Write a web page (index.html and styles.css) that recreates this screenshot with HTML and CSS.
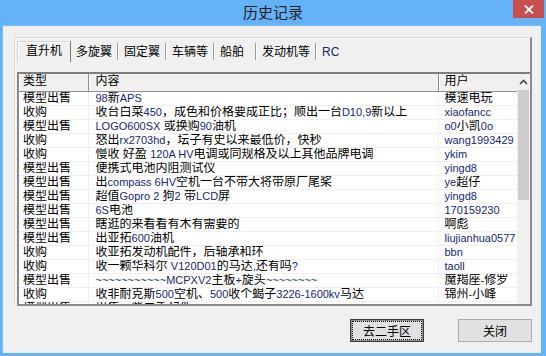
FILE: index.html
```html
<!DOCTYPE html>
<html>
<head>
<meta charset="utf-8" />
<title>历史记录</title>
<link rel="stylesheet" href="styles.css">
</head>
<body>
<div id="win">

<div class="titlebar">
<span class="title">历史记录</span>
<span class="close_btn">
<svg width="10" height="9" viewBox="0 0 10 9"><path d="M1 0.5 L9 8.5 M9 0.5 L1 8.5" stroke="#fff" stroke-width="1.8"/></svg>
</span>
</div>

<div class="client">

<div class="tab_frame">
<div class="tab_strip">
<span class="tab tab_on">直升机</span>
<span class="tab">多旋翼</span>
<span class="tab">固定翼</span>
<span class="tab">车辆等</span>
<span class="tab tab_wide">船舶</span>
<span class="tab">发动机等</span>
<span class="tab tab_last">RC</span>
</div>

<div class="list">
<div class="list_body">
<table class="grid">
<colgroup><col class="c_type" /><col class="c_msg" /><col class="c_user" /></colgroup>
<tr class="head"><th>类型</th><th>内容</th><th>用户</th></tr>
<tr><td>模型出售</td><td><span class="en">98</span>新<span class="en">APS</span></td><td>模速电玩</td></tr>
<tr><td>收购</td><td>收台白菜<span class="en">450</span>，成色和价格要成正比；顺出一台<span class="en">D10,9</span>新以上</td><td><span class="en">xiaofancc</span></td></tr>
<tr><td>模型出售</td><td><span class="en">LOGO600SX</span> 或换购<span class="en">90</span>油机</td><td><span class="en">o0</span>小凯<span class="en">0o</span></td></tr>
<tr><td>收购</td><td>怒出<span class="en">rx2703hd</span>，坛子有史以来最低价，快秒</td><td><span class="en">wang1993429</span></td></tr>
<tr><td>收购</td><td>慢收 好盈 <span class="en">120A HV</span>电调或同规格及以上其他品牌电调</td><td><span class="en">ykim</span></td></tr>
<tr><td>模型出售</td><td>便携式电池内阻测试仪</td><td><span class="en">yingd8</span></td></tr>
<tr><td>模型出售</td><td>出<span class="en">compass 6HV</span>空机一台不带大将带原厂尾桨</td><td><span class="en">ye</span>超仔</td></tr>
<tr><td>模型出售</td><td>超值<span class="en">Gopro 2</span> 狗<span class="en">2</span> 带<span class="en">LCD</span>屏</td><td><span class="en">yingd8</span></td></tr>
<tr><td>模型出售</td><td><span class="en">6S</span>电池</td><td><span class="en">170159230</span></td></tr>
<tr><td>模型出售</td><td>瞎逛的来看看有木有需要的</td><td>啊彪</td></tr>
<tr><td>模型出售</td><td>出亚拓<span class="en">600</span>油机</td><td><span class="en">liujianhua0577</span></td></tr>
<tr><td>收购</td><td>收亚拓发动机配件，后轴承和环</td><td><span class="en">bbn</span></td></tr>
<tr><td>收购</td><td>收一颗华科尔 <span class="en">V120D01</span>的马达<span class="en">,</span>还有吗<span class="en">?</span></td><td><span class="en">taoll</span></td></tr>
<tr><td>模型出售</td><td><span class="en">~~~~~~~~~~~MCPXV2</span>主板<span class="en">+</span>旋头<span class="en">~~~~~~~~</span></td><td>魔羯座<span class="en">-</span>修罗</td></tr>
<tr><td>收购</td><td>收非耐克斯<span class="en">500</span>空机、<span class="en">500</span>收个蝎子<span class="en">3226-1600kv</span>马达</td><td>锦州<span class="en">-</span>小峰</td></tr>
<tr><td>模型出售</td><td>出售一些二手配件</td><td><span class="en">heli</span></td></tr>
</table>
</div>
<div class="vscroll">
<div class="sb_up">
<svg width="9" height="6" viewBox="0 0 9 6"><path d="M1 5 L4.5 1.5 L8 5" fill="none" stroke="#444" stroke-width="1.6"/></svg>
</div>
<div class="sb_thumb"></div>
</div>
</div><!--list end-->
</div><!--tab_frame end-->

<div class="btn_row">
<span class="btn btn_focus"><span class="btn_txt">去二手区</span></span>
<span class="btn"><span class="btn_txt">关闭</span></span>
</div>

</div><!--client end-->
</div>
</body>
</html>
```

FILE: styles.css
```css
html,body{
	margin:0;
	padding:0;
}
body{
	width:546px;
	height:356px;
	overflow:hidden;
	background-color:#64b2f8;
	font-family:"Liberation Sans","Noto Sans CJK SC",sans-serif;
	font-size:12px;
	color:#000;
}
#win{
	display:flex;
	flex-direction:column;
	height:356px;
}
.en{
	color:#16277a;
	font-size:11px;
}

/* title bar */
.titlebar{
	height:25px;
	display:grid;
	grid-template-columns:1fr auto 1fr;
	align-items:start;
}
.title{
	grid-column:2;
	font-family:"Noto Sans CJK SC",sans-serif;
	font-size:15px;
	line-height:24px;
	color:#1e1e1e;
}
.close_btn{
	grid-column:3;
	justify-self:end;
	width:31px;
	height:18px;
	margin-right:2px;
	background-color:#c7504f;
	display:flex;
	align-items:center;
	justify-content:center;
}

/* client area */
.client{
	flex:1;
	margin:0 5px 3px 2px;
	background-color:#f0f0f0;
	padding:11px 9px 0 11px;
	border-top:1px solid #7cbcf5;
	border-left:1px solid #7cbcf5;
}
.tab_frame{
	height:268px;
	border-top:1px solid #d9d9d9;
	border-left:1px solid #d9d9d9;
	border-right:2px solid #8d8d8d;
	padding-left:2px;
	display:flex;
	flex-direction:column;
	box-shadow:inset 1px 1px 0 #fff;
}
.tab_strip{
	height:34px;
	display:flex;
	align-items:flex-start;
}
.tab{
	margin-top:5px;
	height:17px;
	line-height:19px;
	padding:0 5px;
	border-right:1px solid #9a9a9a;
	box-shadow:1px 0 0 #fff;
	margin-right:1px;
	white-space:nowrap;
}
.tab_on{
	margin-top:3px;
	height:20px;
	line-height:18px;
	padding:0 8px 0 8px;
	border-left:1px solid #d6d6d6;
	border-top:1px solid #d6d6d6;
	border-right:1px solid #7a7a7a;
	box-shadow:inset 1px 1px 0 #fff;
	margin-right:0;
}
.tab_wide{
	padding-right:11px;
}
.tab_last{
	border-right:none;
	box-shadow:none;
	color:#1a2560;
}

/* list view */
.list{
	height:230px;
	display:flex;
	border-top:2px solid #7e7e7e;
	border-left:2px solid #8a8a8a;
	border-bottom:2px solid #8a8a8a;
	background-color:#fff;
	overflow:hidden;
}
.list_body{
	width:498px;
	overflow:hidden;
}
.grid{
	width:498px;
	table-layout:fixed;
	border-collapse:collapse;
}
.c_type{width:69px;}
.c_msg{width:350px;}
.c_user{width:79px;}
.grid td,.grid th{
	height:13px;
	line-height:13px;
	padding:0 0 0 4px;
	white-space:nowrap;
	overflow:hidden;
	border-bottom:1px solid #f0f0f0;
	border-right:1px solid #f0f0f0;
	font-weight:normal;
	text-align:left;
}
.grid td:nth-child(2),.grid th:nth-child(2){
	padding-left:7px;
}
.grid td:nth-child(3),.grid th:nth-child(3){
	padding-left:6px;
}
.grid tr.head th{
	height:17px;
	line-height:15px;
	vertical-align:top;
	background-color:#f0f0f0;
	border-bottom:1px solid #8f8f8f;
	border-right:1px solid #8f8f8f;
	box-shadow:inset 1px 0 0 #fff;
}
.vscroll{
	width:13px;
	background-color:#f0f0f0;
	display:flex;
	flex-direction:column;
}
.sb_up{
	height:16px;
	display:flex;
	align-items:center;
	justify-content:center;
}
.sb_thumb{
	height:110px;
	margin:0 1px;
	background-color:#cdcdcd;
}

/* buttons */
.btn_row{
	margin-top:13px;
	display:flex;
	justify-content:flex-end;
	gap:34px;
}
.btn{
	width:74px;
	height:23px;
	box-sizing:border-box;
	border:1px solid #acacac;
	background-color:#e1e1e1;
	display:flex;
	align-items:center;
	justify-content:center;
}
.btn_focus{
	border:1px solid #3c3c3c;
	box-shadow:inset 0 0 0 1px #8e8e8e;
}
.btn_focus .btn_txt{
	outline:1px dotted #000;
	padding:1px 5px;
	width:58px;
	text-align:center;
}
.btn_txt{
	font-family:"Noto Sans CJK SC",sans-serif;
	line-height:15px;
}
```
